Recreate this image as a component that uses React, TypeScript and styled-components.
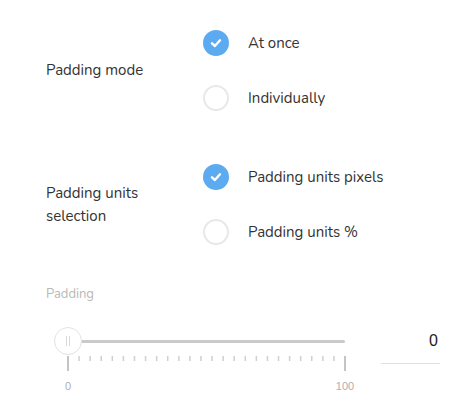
import React from 'react'
import styled, { createGlobalStyle } from 'styled-components'

const GlobalStyle = createGlobalStyle`
  html, body {
    margin: 0;
    padding: 0;
    background: #fff;
  }
  body {
    font-family: Nunito, Lato, 'Open Sans', sans-serif;
    color: #333;
  }
`

const Page = styled.div`
  width: 460px;
  height: 411px;
  padding: 29px 0 0 46px;
  box-sizing: border-box;
  display: flex;
  flex-direction: column;
`

const Group = styled.div<{ $gap?: number }>`
  display: grid;
  grid-template-columns: 157px 1fr;
  align-items: center;
  margin-bottom: ${(p) => p.$gap ?? 0}px;
`

const GroupLabel = styled.div`
  font-size: 15px;
  line-height: 23px;
  color: #333;
  width: 110px;
`

const Options = styled.div`
  display: flex;
  flex-direction: column;
  gap: 27px;
`

const Option = styled.label`
  display: flex;
  align-items: center;
  gap: 19px;
  height: 28px;
  font-size: 15px;
  color: #333;
  cursor: pointer;
`

const Radio = styled.span<{ $checked?: boolean }>`
  width: 26px;
  height: 26px;
  border-radius: 50%;
  box-sizing: border-box;
  display: flex;
  align-items: center;
  justify-content: center;
  background: ${(p) => (p.$checked ? '#5cabf1' : '#fff')};
  border: ${(p) => (p.$checked ? 'none' : '2px solid #e8e8e8')};
`

const FieldLabel = styled.div`
  font-size: 13px;
  color: #b8b8b8;
  margin-bottom: 25px;
`

const SliderRow = styled.div`
  display: flex;
  align-items: flex-start;
`

const Slider = styled.div`
  position: relative;
  width: 277px;
  margin-left: 22px;
  padding-top: 12px;
`

const Rail = styled.div`
  height: 3px;
  background: #cacaca;
  border-radius: 2px;
`

const Thumb = styled.div`
  position: absolute;
  left: -14px;
  top: -1px;
  width: 28px;
  height: 28px;
  border-radius: 50%;
  box-sizing: border-box;
  border: 1px solid #e2e2e2;
  background: #fff;
  display: flex;
  align-items: center;
  justify-content: center;
  gap: 2px;

  &::before,
  &::after {
    content: '';
    width: 1px;
    height: 10px;
    background: #d8d8d8;
  }
`

const Scale = styled.svg`
  display: block;
  margin-left: -1px;
  margin-top: 13px;
  overflow: visible;
`

const ScaleLabels = styled.div`
  display: flex;
  justify-content: space-between;
  margin-top: 9px;
`

const ScaleLabel = styled.span`
  width: 0;
  display: flex;
  justify-content: center;
  font-family: 'Liberation Sans', Arial, sans-serif;
  font-size: 11px;
  color: #b0b0b0;
  white-space: nowrap;
`

const ValueInput = styled.input`
  margin-left: 36px;
  box-sizing: border-box;
  width: 59px;
  height: 36px;
  border: none;
  border-bottom: 1px solid #e0e0e0;
  outline: none;
  padding: 0 2px 9px 0;
  text-align: right;
  font-family: 'Liberation Sans', Arial, sans-serif;
  font-size: 16px;
  color: #222;
  background: transparent;
`

const Check = () => (
  <svg width="14" height="14" viewBox="0 0 14 14">
    <path d="M3 7.3 L5.9 10 L11 4.3" fill="none" stroke="#fff" strokeWidth="2.4" strokeLinecap="round" strokeLinejoin="round" />
  </svg>
)

const ticks = Array.from({ length: 26 }, (_, i) => i * 4)

const App = () => {
  const [mode, setMode] = React.useState('once')
  const [units, setUnits] = React.useState('px')
  const [padding, setPadding] = React.useState('0')

  return (
    <Page>
      <GlobalStyle />
      <Group $gap={51}>
        <GroupLabel>Padding mode</GroupLabel>
        <Options>
          <Option onClick={() => setMode('once')}>
            <Radio $checked={mode === 'once'}>{mode === 'once' && <Check />}</Radio>
            At once
          </Option>
          <Option onClick={() => setMode('each')}>
            <Radio $checked={mode === 'each'}>{mode === 'each' && <Check />}</Radio>
            Individually
          </Option>
        </Options>
      </Group>
      <Group $gap={39}>
        <GroupLabel>Padding units selection</GroupLabel>
        <Options>
          <Option onClick={() => setUnits('px')}>
            <Radio $checked={units === 'px'}>{units === 'px' && <Check />}</Radio>
            Padding units pixels
          </Option>
          <Option onClick={() => setUnits('pct')}>
            <Radio $checked={units === 'pct'}>{units === 'pct' && <Check />}</Radio>
            Padding units %
          </Option>
        </Options>
      </Group>
      <FieldLabel>Padding</FieldLabel>
      <SliderRow>
        <Slider>
          <Rail />
          <Thumb />
          <Scale width="279" height="15">
            {ticks.map((t) => {
              const x = 1 + (t / 100) * 277
              const major = t === 0 || t === 100
              return (
                <line
                  key={t}
                  x1={x}
                  x2={x}
                  y1={0}
                  y2={major ? 15 : 5}
                  stroke={major ? '#c4c4c4' : '#cfcfcf'}
                  strokeWidth={major ? 2 : 1.5}
                />
              )
            })}
          </Scale>
          <ScaleLabels>
            <ScaleLabel>0</ScaleLabel>
            <ScaleLabel>100</ScaleLabel>
          </ScaleLabels>
        </Slider>
        <ValueInput value={padding} onChange={(e) => setPadding(e.target.value)} />
      </SliderRow>
    </Page>
  )
}

export default App
